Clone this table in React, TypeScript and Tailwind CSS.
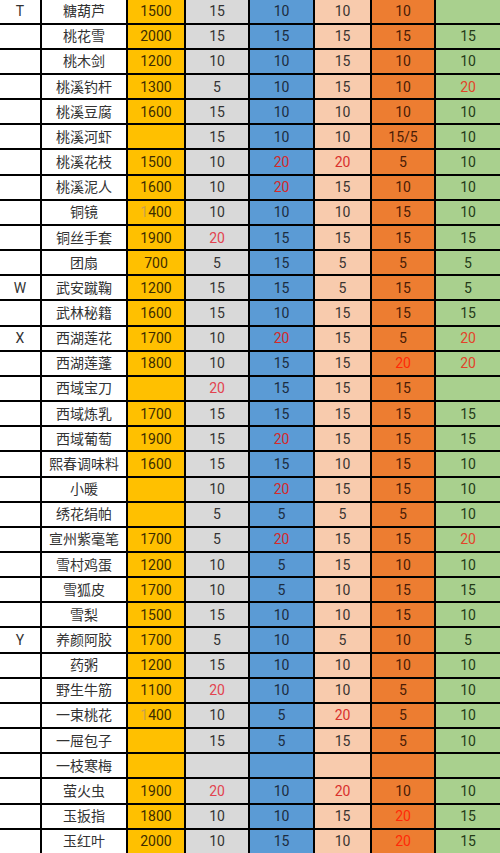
import React from "react";

type Row = {
  letter?: string;
  name: string;
  price?: string;
  vals: (string | null)[];
  fadedOne?: boolean;
};

// "r" suffix marks a red value
const rows: Row[] = [
  { letter: "T", name: "糖葫芦", price: "1500", vals: ["15", "10", "10", "10", null] },
  { name: "桃花雪", price: "2000", vals: ["15", "15", "15", "15", "15"] },
  { name: "桃木剑", price: "1200", vals: ["10", "10", "15", "10", "10"] },
  { name: "桃溪钓杆", price: "1300", vals: ["5", "10", "15", "10", "20r"] },
  { name: "桃溪豆腐", price: "1600", vals: ["15", "10", "10", "10", "10"] },
  { name: "桃溪河虾", vals: ["15", "10", "10", "15/5", "10"] },
  { name: "桃溪花枝", price: "1500", vals: ["10", "20r", "20r", "5", "10"] },
  { name: "桃溪泥人", price: "1600", vals: ["10", "20r", "15", "10", "10"] },
  { name: "铜镜", price: "400", fadedOne: true, vals: ["10", "10", "10", "15", "10"] },
  { name: "铜丝手套", price: "1900", vals: ["20r", "15", "15", "15", "15"] },
  { name: "团扇", price: "700", vals: ["5", "15", "5", "5", "5"] },
  { letter: "W", name: "武安蹴鞠", price: "1200", vals: ["15", "15", "5", "15", "5"] },
  { name: "武林秘籍", price: "1600", vals: ["15", "10", "15", "15", "15"] },
  { letter: "X", name: "西湖莲花", price: "1700", vals: ["10", "20r", "15", "5", "20r"] },
  { name: "西湖莲蓬", price: "1800", vals: ["10", "15", "15", "20r", "20r"] },
  { name: "西域宝刀", vals: ["20r", "15", "15", "15", null] },
  { name: "西域炼乳", price: "1700", vals: ["15", "15", "15", "15", "15"] },
  { name: "西域葡萄", price: "1900", vals: ["15", "20r", "15", "15", "15"] },
  { name: "熙春调味料", price: "1600", vals: ["15", "15", "10", "15", "10"] },
  { name: "小暖", vals: ["10", "20r", "15", "15", "10"] },
  { name: "绣花绢帕", vals: ["5", "5", "5", "5", "10"] },
  { name: "宣州紫毫笔", price: "1700", vals: ["5", "20r", "15", "15", "20r"] },
  { name: "雪村鸡蛋", price: "1200", vals: ["10", "5", "15", "10", "10"] },
  { name: "雪狐皮", price: "1700", vals: ["10", "5", "10", "15", "15"] },
  { name: "雪梨", price: "1500", vals: ["15", "10", "10", "15", "10"] },
  { letter: "Y", name: "养颜阿胶", price: "1700", vals: ["5", "10", "5", "10", "5"] },
  { name: "药粥", price: "1200", vals: ["15", "10", "10", "10", "10"] },
  { name: "野生牛筋", price: "1100", vals: ["20r", "10", "10", "5", "10"] },
  { name: "一束桃花", price: "400", fadedOne: true, vals: ["10", "5", "20r", "5", "10"] },
  { name: "一屉包子", vals: ["15", "5", "15", "5", "10"] },
  { name: "一枝寒梅", vals: [null, null, null, null, null] },
  { name: "萤火虫", price: "1900", vals: ["20r", "10", "20r", "10", "10"] },
  { name: "玉扳指", price: "1800", vals: ["10", "10", "15", "20r", "15"] },
  { name: "玉红叶", price: "2000", vals: ["10", "15", "10", "20r", "15"] },
];

const cols = [
  { bg: "bg-[#d9d9d9]", text: "text-[#333333]", red: "text-[#e2434f]" },
  { bg: "bg-[#5b9bd5]", text: "text-[#1c2c40]", red: "text-[#d42a2a]" },
  { bg: "bg-[#f8cbad]", text: "text-[#3a3430]", red: "text-[#d8302c]" },
  { bg: "bg-[#ed7d31]", text: "text-[#4a1c06]", red: "text-[#ff2a08]" },
  { bg: "bg-[#a9d08e]", text: "text-[#243a18]", red: "text-[#e2442a]" },
];

const cell = "flex items-center justify-center leading-none";

export default function App() {
  return (
    <div
      className="w-[500px] h-[853px] overflow-hidden bg-black text-[14px]"
      style={{ fontFamily: 'Roboto, "Noto Sans CJK SC", sans-serif' }}
    >
      <div className="grid grid-cols-[40px_84px_56px_62px_63px_55px_62px_64px] gap-[2px] grid-rows-[22.7px] auto-rows-[23.17px]">
        {rows.map((r, i) => (
          <React.Fragment key={i}>
            <div className={`${cell} bg-white text-[#333]`}>{r.letter}</div>
            <div className={`${cell} bg-white text-[#333]`}>{r.name}</div>
            <div className={`${cell} bg-[#ffc000] text-[#3d2c00]`}>
              <span>
                {r.fadedOne && <span className="text-[#c9a24e]">1</span>}
                {r.price}
              </span>
            </div>
            {r.vals.map((v, j) => {
              const c = cols[j];
              const red = v?.endsWith("r");
              return (
                <div key={j} className={`${cell} ${c.bg} ${red ? c.red : c.text}`}>
                  {v ? v.replace("r", "") : ""}
                </div>
              );
            })}
          </React.Fragment>
        ))}
      </div>
    </div>
  );
}
